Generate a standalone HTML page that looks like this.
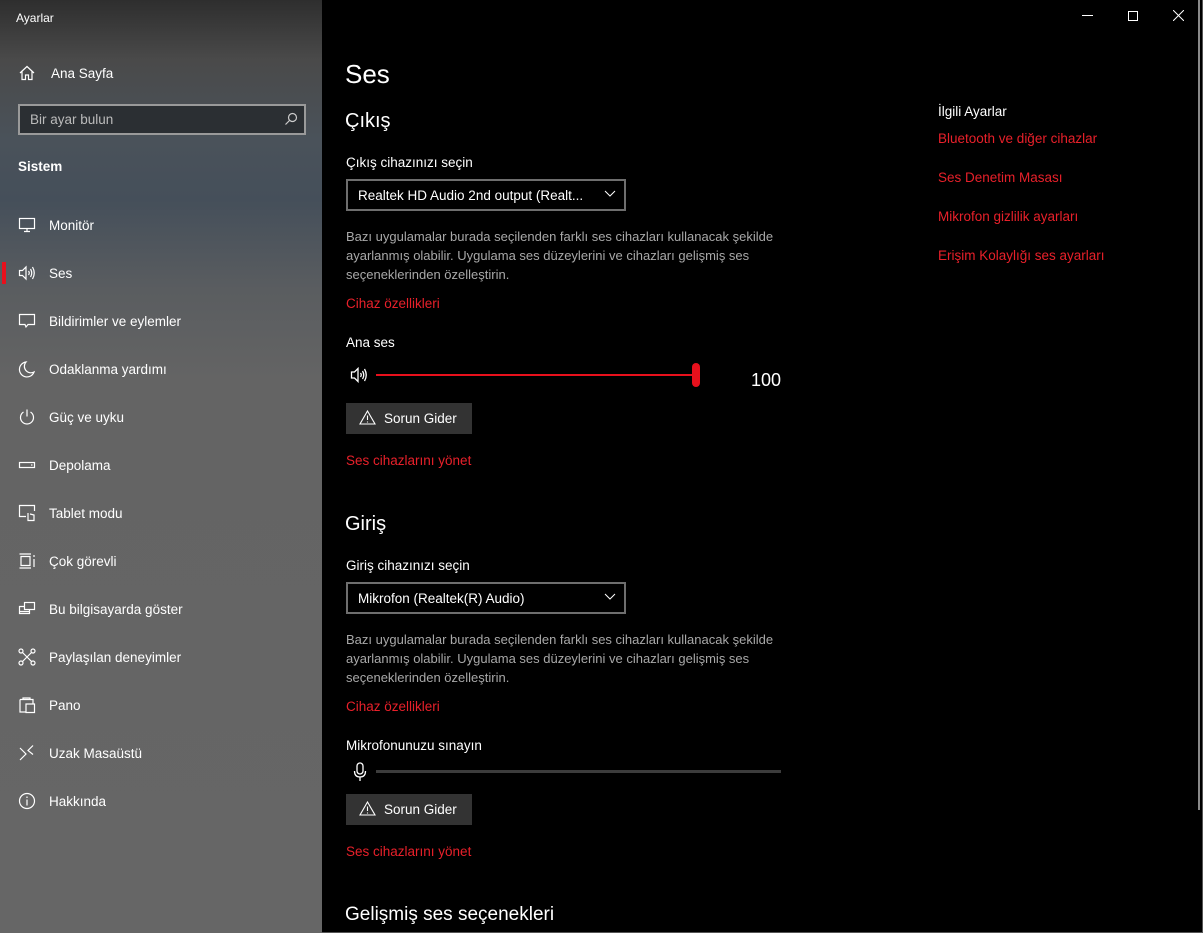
<!DOCTYPE html>
<html><head><meta charset="utf-8"><style>
*{margin:0;padding:0;box-sizing:border-box}
body{width:1203px;height:933px;overflow:hidden;background:#000;font-family:"Liberation Sans",sans-serif;color:#fff;position:relative}
#side{position:absolute;left:0;top:0;width:322px;height:933px;background:linear-gradient(180deg,#2e2e2e 0px,#4a4a4a 60px,#4a525a 140px,#454f5a 200px,#5a5d60 290px,#646464 380px,#666 933px)}
.a{position:absolute;white-space:nowrap}
.t{transform:translateY(1px)}
.nav{position:absolute;left:49px;font-size:13.5px;color:#fff;transform:translateY(1px)}
.ic{position:absolute;left:18px;width:18px;height:18px}
.ic svg{width:18px;height:18px;fill:none;stroke:#fff;stroke-width:1.2}
.red{color:#e8202a;font-size:13.5px;transform:translateY(1px)}
.g{color:#a8a8a8;font-size:13px;line-height:19px}
.btn{position:absolute;left:346px;width:126px;height:31px;background:#333;font-size:13.5px;line-height:31px;padding-left:38px}
.drop{position:absolute;left:346px;width:280px;height:32px;border:2px solid #6e6e6e;font-size:13.5px;line-height:29px;padding-left:10px}
</style></head><body>
<div id="side">
<div class="a t" style="left:16px;top:10px;font-size:12px">Ayarlar</div>
<div class="ic" style="top:64px"><svg viewBox="0 0 18 18"><path d="M2 9 L9 2.5 L16 9 M4 7.5 V15.5 H7.5 V11 H10.5 V15.5 H14 V7.5"/></svg></div>
<div class="nav" style="left:51px;top:65px">Ana Sayfa</div>
<div class="a" style="left:18px;top:104px;width:288px;height:31px;border:2px solid #9a9a9a;background:#2b2f33"></div>
<div class="a t" style="left:30px;top:111px;font-size:13.5px;color:#bbb">Bir ayar bulun</div>
<svg class="a" style="left:284px;top:112px" width="14" height="14" viewBox="0 0 14 14" fill="none" stroke="#ccc" stroke-width="1.2"><circle cx="8.5" cy="5.5" r="4"/><path d="M5.5 8.5 L1.5 12.5"/></svg>
<div class="a t" style="left:18px;top:158px;font-size:13.5px;font-weight:bold">Sistem</div>

<div class="ic" style="top:216px"><svg viewBox="0 0 18 18"><rect x="1.5" y="2.5" width="15" height="10"/><path d="M9 12.5 V15 M6 15.5 H12"/></svg></div>
<div class="nav" style="top:217px">Monitör</div>
<div class="a" style="left:2px;top:262px;width:4px;height:22px;background:#e8101c"></div>
<div class="ic" style="top:264px"><svg viewBox="0 0 18 18"><path d="M1.5 6.5 H4.5 L8 3 V15 L4.5 11.5 H1.5 Z M10.5 7 Q12 9 10.5 11 M12.5 5 Q15 9 12.5 13 M14.5 3 Q18 9 14.5 15"/></svg></div>
<div class="nav" style="top:265px">Ses</div>
<div class="ic" style="top:312px"><svg viewBox="0 0 18 18"><path d="M1.5 2.5 H16.5 V12.5 H10 L8 15 L7 12.5 H1.5 Z"/></svg></div>
<div class="nav" style="top:313px">Bildirimler ve eylemler</div>
<div class="ic" style="top:360px"><svg viewBox="0 0 18 18"><path d="M8 2 A7.5 7.5 0 1 0 16 12 A6.5 6.5 0 0 1 8 2 Z"/></svg></div>
<div class="nav" style="top:361px">Odaklanma yardımı</div>
<div class="ic" style="top:408px"><svg viewBox="0 0 18 18"><path d="M9 1.5 V8.5 M5.5 4 A6.5 6.5 0 1 0 12.5 4"/></svg></div>
<div class="nav" style="top:409px">Güç ve uyku</div>
<div class="ic" style="top:456px"><svg viewBox="0 0 18 18"><rect x="1.5" y="6.5" width="15" height="5"/><path d="M13 9 H14.5"/></svg></div>
<div class="nav" style="top:457px">Depolama</div>
<div class="ic" style="top:504px"><svg viewBox="0 0 18 18"><path d="M8 12.5 H1.5 V1.5 H16.5 V7"/><path d="M10 9 V16.5 H16 V11 L12 10"/></svg></div>
<div class="nav" style="top:505px">Tablet modu</div>
<div class="ic" style="top:552px"><svg viewBox="0 0 18 18"><path d="M1.5 2 H13 M1.5 16 H13 M3 4.5 H12 V13.5 H3 Z M16 3 V5 M16 7 V15"/></svg></div>
<div class="nav" style="top:553px">Çok görevli</div>
<div class="ic" style="top:600px"><svg viewBox="0 0 18 18"><rect x="6.5" y="2.5" width="10" height="7"/><path d="M6.5 6.5 H1.5 V13.5 H11.5 V9.5 M1.5 11.5 H11"/></svg></div>
<div class="nav" style="top:601px">Bu bilgisayarda göster</div>
<div class="ic" style="top:648px"><svg viewBox="0 0 18 18"><circle cx="3" cy="3" r="2"/><circle cx="15" cy="3" r="2"/><circle cx="3" cy="15" r="2"/><circle cx="15" cy="15" r="2"/><path d="M4.5 4.5 L13.5 13.5 M13.5 4.5 L4.5 13.5"/></svg></div>
<div class="nav" style="top:649px">Paylaşılan deneyimler</div>
<div class="ic" style="top:696px"><svg viewBox="0 0 18 18"><path d="M5 3.5 V2 H12 V3.5 M2 3.5 H15 V8 M2 3.5 V16 H8 M8 8 H16.5 V16.5 H8 Z"/></svg></div>
<div class="nav" style="top:697px">Pano</div>
<div class="ic" style="top:744px"><svg viewBox="0 0 18 18"><path d="M2 4 L8 10 L2 16 M15 1.5 L10 6.5 L15 10.5"/></svg></div>
<div class="nav" style="top:745px">Uzak Masaüstü</div>
<div class="ic" style="top:792px"><svg viewBox="0 0 18 18"><circle cx="9" cy="9" r="7.5"/><path d="M9 7.5 V13.5 M9 4.5 V6"/></svg></div>
<div class="nav" style="top:793px">Hakkında</div>
</div>

<div class="a" style="left:1082px;top:15px;width:11px;height:1px;background:#fff"></div>
<div class="a" style="left:1128px;top:11px;width:10px;height:10px;border:1px solid #fff"></div>
<svg class="a" style="left:1173px;top:10px" width="11" height="11" viewBox="0 0 11 11" stroke="#fff" stroke-width="1"><path d="M0 0 L11 11 M11 0 L0 11"/></svg>
<div class="a" style="left:1198px;top:0;width:2px;height:810px;background:#8a8a8a"></div>
<div class="a" style="left:1202px;top:0;width:1px;height:933px;background:#555"></div>
<div class="a" style="left:322px;top:932px;width:881px;height:1px;background:#555"></div>

<div class="a t" style="left:345px;top:58px;font-size:26px">Ses</div>
<div class="a t" style="left:345px;top:109px;font-size:20px">Çıkış</div>
<div class="a t" style="left:346px;top:154px;font-size:13.5px">Çıkış cihazınızı seçin</div>
<div class="drop" style="top:179px">Realtek HD Audio 2nd output (Realt...</div>
<svg class="a" style="left:604px;top:190px" width="12" height="8" viewBox="0 0 12 8" fill="none" stroke="#fff" stroke-width="1"><path d="M1 1 L6 6 L11 1"/></svg>
<div class="a g t" style="left:346px;top:226px">Bazı uygulamalar burada seçilenden farklı ses cihazları kullanacak şekilde<br>ayarlanmış olabilir. Uygulama ses düzeylerini ve cihazları gelişmiş ses<br>seçeneklerinden özelleştirin.</div>
<div class="a red" style="left:346px;top:295px">Cihaz özellikleri</div>
<div class="a t" style="left:346px;top:334px;font-size:13.5px">Ana ses</div>
<svg class="a" style="left:350px;top:366px" width="22" height="18" viewBox="0 0 22 18" fill="none" stroke="#fff" stroke-width="1.3"><path d="M1.5 6 H4.5 L8 2.5 V15.5 L4.5 12 H1.5 Z M10.5 7 Q12 9 10.5 11 M12.5 5 Q15 9 12.5 13 M14.5 3 Q18 9 14.5 15"/></svg>
<div class="a" style="left:376px;top:374px;width:320px;height:2px;background:#e8101c"></div>
<div class="a" style="left:692px;top:363px;width:8px;height:24px;border-radius:4px;background:#e8101c"></div>
<div class="a t" style="left:751px;top:369px;font-size:18px">100</div>
<div class="btn" style="top:403px">Sorun Gider</div>
<svg class="a" style="left:359px;top:410px" width="17" height="15" viewBox="0 0 17 15" fill="none" stroke="#fff" stroke-width="1.1"><path d="M8.5 1 L16 14 H1 Z M8.5 5.5 V10 M8.5 11.5 V12.5"/></svg>
<div class="a red" style="left:346px;top:452px">Ses cihazlarını yönet</div>

<div class="a t" style="left:345px;top:512px;font-size:20px">Giriş</div>
<div class="a t" style="left:346px;top:557px;font-size:13.5px">Giriş cihazınızı seçin</div>
<div class="drop" style="top:582px">Mikrofon (Realtek(R) Audio)</div>
<svg class="a" style="left:604px;top:593px" width="12" height="8" viewBox="0 0 12 8" fill="none" stroke="#fff" stroke-width="1"><path d="M1 1 L6 6 L11 1"/></svg>
<div class="a g t" style="left:346px;top:629px">Bazı uygulamalar burada seçilenden farklı ses cihazları kullanacak şekilde<br>ayarlanmış olabilir. Uygulama ses düzeylerini ve cihazları gelişmiş ses<br>seçeneklerinden özelleştirin.</div>
<div class="a red" style="left:346px;top:698px">Cihaz özellikleri</div>
<div class="a t" style="left:346px;top:737px;font-size:13.5px">Mikrofonunuzu sınayın</div>
<svg class="a" style="left:353px;top:762px" width="14" height="20" viewBox="0 0 14 20" fill="none" stroke="#fff" stroke-width="1.3"><rect x="4" y="1" width="6" height="11" rx="3"/><path d="M1.5 9 Q1.5 15 7 15 Q12.5 15 12.5 9 M7 15 V19"/></svg>
<div class="a" style="left:376px;top:770px;width:405px;height:3px;background:#3c3c3c"></div>
<div class="btn" style="top:794px">Sorun Gider</div>
<svg class="a" style="left:359px;top:801px" width="17" height="15" viewBox="0 0 17 15" fill="none" stroke="#fff" stroke-width="1.1"><path d="M8.5 1 L16 14 H1 Z M8.5 5.5 V10 M8.5 11.5 V12.5"/></svg>
<div class="a red" style="left:346px;top:843px">Ses cihazlarını yönet</div>
<div class="a t" style="left:345px;top:903px;font-size:19px">Gelişmiş ses seçenekleri</div>

<div class="a t" style="left:938px;top:103px;font-size:13.5px">İlgili Ayarlar</div>
<div class="a red" style="left:938px;top:130px">Bluetooth ve diğer cihazlar</div>
<div class="a red" style="left:938px;top:169px">Ses Denetim Masası</div>
<div class="a red" style="left:938px;top:208px">Mikrofon gizlilik ayarları</div>
<div class="a red" style="left:938px;top:247px">Erişim Kolaylığı ses ayarları</div>
</body></html>
